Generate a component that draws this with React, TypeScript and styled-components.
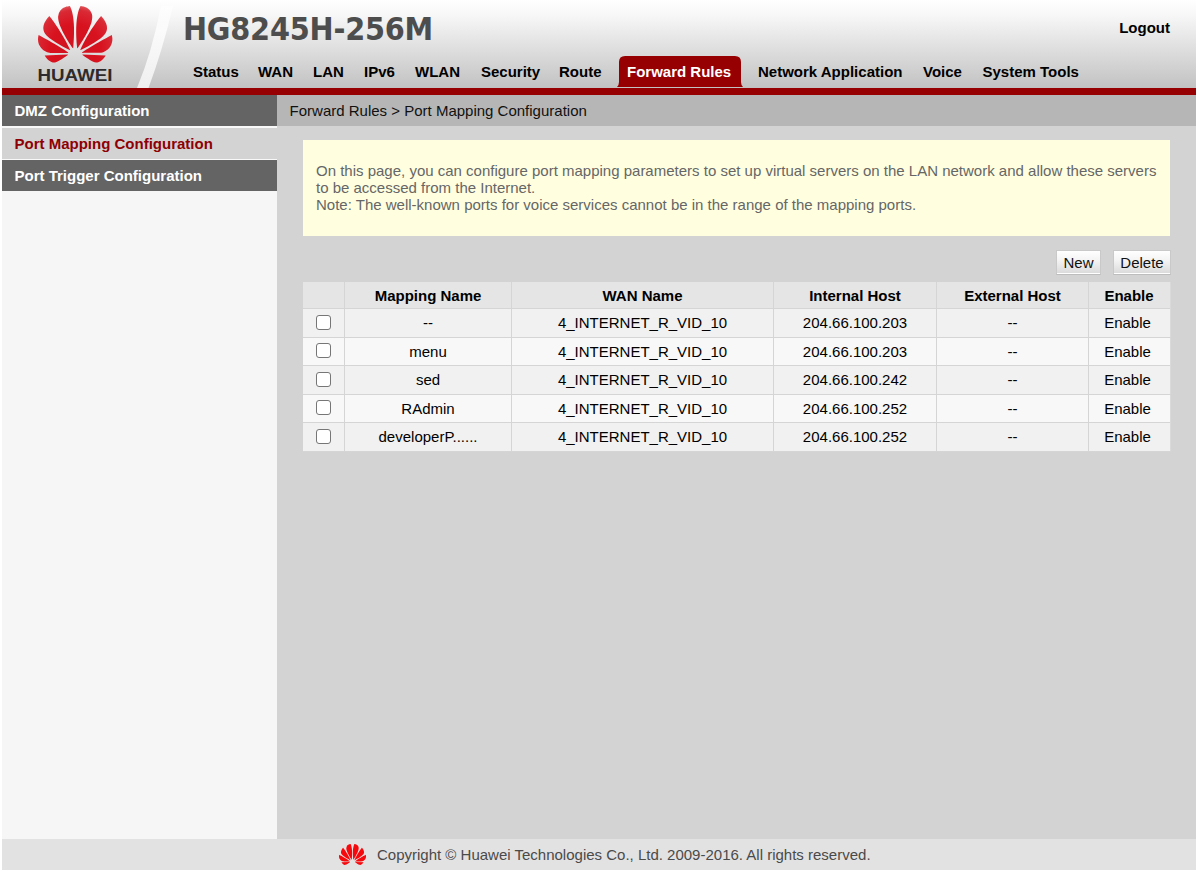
import React from "react";
import styled, { createGlobalStyle } from "styled-components";

const GlobalStyle = createGlobalStyle`
  * { box-sizing: border-box; }
  body {
    margin: 0;
    background: #fff;
    font-family: "Liberation Sans", Arial, sans-serif;
    font-size: 15px;
    color: #000;
  }
`;

const Page = styled.div`
  width: 1194px;
  height: 870px;
  margin-left: 2px;
  display: flex;
  flex-direction: column;
`;

const Header = styled.header`
  height: 95px;
  flex: none;
  display: flex;
  border-bottom: 7px solid #970002;
  background: linear-gradient(#ffffff 0, #f8f8f8 14px, #c2c2c2 88px);
`;

const Brand = styled.svg`
  display: block;
  width: 180px;
  height: 88px;
  flex: none;
`;

const HeaderMain = styled.div`
  flex: 1;
  display: flex;
  flex-direction: column;
`;

const TitleRow = styled.div`
  height: 56px;
  display: flex;
  justify-content: space-between;
  align-items: flex-start;
  padding-right: 26px;
`;

const Title = styled.h1`
  margin: 0;
  padding-left: 1px;
  font: bold 32px/58px "DejaVu Sans Condensed", "DejaVu Sans", sans-serif;
  font-stretch: condensed;
  letter-spacing: -0.22px;
  color: #4d4d4d;
`;

const Logout = styled.a`
  font-weight: bold;
  line-height: 56px;
`;

const Nav = styled.nav`
  display: flex;
  height: 32px;
  padding-left: 11px;
`;

const NavItem = styled.a<{ $w: number }>`
  width: ${(p) => p.$w}px;
  flex: none;
  font-weight: bold;
  line-height: 32px;
  white-space: nowrap;
`;

const ActiveTab = styled.a`
  width: 126px;
  flex: none;
  height: 31px;
  margin: 0 15px 0 -2px;
  padding-left: 10px;
  font-weight: bold;
  line-height: 32px;
  white-space: nowrap;
  color: #fff;
  background: #970002;
  clip-path: path("M0 31 Q2 29 2 26 V6 Q2 0 8 0 H118 Q124 0 124 6 V26 Q124 29 126 31 Z");
`;

const Body = styled.div`
  flex: 1;
  display: flex;
`;

const Sidebar = styled.aside`
  width: 275px;
  flex: none;
  background: #f6f6f6;
`;

const MenuItem = styled.a<{ $active?: boolean; $h: number }>`
  display: block;
  height: ${(p) => p.$h}px;
  padding-left: 12.5px;
  font-weight: bold;
  line-height: 32px;
  color: ${(p) => (p.$active ? "#8e0003" : "#fff")};
  background: ${(p) => (p.$active ? "#d3d3d3" : "#646464")};
  border-bottom: ${(p) => p.$h - 31}px solid #f8f8f8;
`;

const Content = styled.main`
  flex: 1;
  background: #d3d3d3;
`;

const Breadcrumb = styled.div`
  height: 31px;
  padding-left: 12.6px;
  line-height: 32px;
  color: #111;
  background: #b6b6b6;
`;

const Panel = styled.div`
  width: 867px;
  margin: 14px 0 0 26px;
`;

const Notice = styled.div`
  height: 96px;
  padding: 22px 0 0 13px;
  line-height: 17px;
  white-space: nowrap;
  color: #666;
  background: #ffffe0;
`;

const Toolbar = styled.div`
  height: 46px;
  display: flex;
  justify-content: flex-end;
  gap: 12px;
  padding-top: 14px;
  margin-right: -1px;
`;

const Button = styled.button<{ $w: number }>`
  width: ${(p) => p.$w}px;
  height: 25px;
  padding: 1px 0 0;
  border: 1px solid #c9c9c9;
  border-bottom-color: #bdbdbd;
  box-shadow: inset 0 -1px #fff;
  background: linear-gradient(#fff, #f4f4f4 40%, #d9d9d9);
  font: inherit;
  line-height: 22px;
  color: #111;
`;

const Table = styled.div`
  display: flex;
  flex-direction: column;
  margin-right: -1px;
`;

const Row = styled.div<{ $h: number; $bg: string; $head?: boolean }>`
  display: grid;
  grid-template-columns: 42px 167px 262px 163px 152px 82px;
  height: ${(p) => p.$h}px;
  line-height: ${(p) => (p.$head ? 27 : 28)}px;
  background: ${(p) => p.$bg};
  font-weight: ${(p) => (p.$head ? "bold" : "normal")};
  border-bottom: 1px solid #d5d5d5;
`;

const Cell = styled.div`
  text-align: center;
  border-right: 1px solid #d5d5d5;
  &:last-child { border-right-color: #dadada; padding-right: 4px; }
`;

const HeadCell = styled(Cell)`
  &:last-child { padding-right: 1px; }
`;

const CheckCell = styled(Cell)<{ $top: number }>`
  display: flex;
  justify-content: center;
  align-items: flex-start;
  padding-top: ${(p) => p.$top}px;
`;

const Checkbox = styled.input.attrs({ type: "checkbox" })`
  appearance: none;
  width: 15px;
  height: 15px;
  margin: 0;
  border: 1px solid #767676;
  border-radius: 3px;
  background: #fff;
`;

const Footer = styled.footer`
  height: 31px;
  flex: none;
  display: flex;
  align-items: center;
  padding-left: 336.5px;
  gap: 11.5px;
  color: #4a4a4a;
  background: #e2e2e2;
`;

const FooterMark = styled.svg`
  display: block;
  width: 27px;
  height: 21px;
`;

const PETALS =
  "M3.67 6.14S1.82 7.91 1.72 9.78v.35c.08 1.51 1.22 2.4 1.22 2.4 1.83 1.79 6.26 4.04 7.3 4.55 0 0 .06.03.1-.01l.02-.04v-.04C7.52 10.8 3.67 6.14 3.67 6.14zM9.65 18.6c-.02-.08-.1-.08-.1-.08l-7.38.26c.8 1.43 2.15 2.53 3.56 2.2.96-.25 3.16-1.78 3.88-2.3.06-.05.04-.09.04-.09zm.08-.78C6.49 15.63.21 12.28.21 12.28c-.15.46-.2.9-.21 1.3v.07c0 1.07.4 1.82.4 1.82.8 1.69 2.34 2.2 2.34 2.2.7.3 1.4.31 1.4.31.12.02 4.4 0 5.54 0 .05 0 .08-.05.08-.05v-.06c0-.03-.03-.05-.03-.05zM9.06 3.19a3.42 3.42 0 00-2.57 3.15v.41c.03.6.16 1.05.16 1.05.66 2.9 3.86 7.65 4.55 8.65.05.05.1.03.1.03a.1.1 0 00.06-.1c1.06-10.6-1.11-13.42-1.11-13.42-.32.02-1.19.23-1.19.23zm8.299 2.27s-.49-1.8-2.44-2.28c0 0-.57-.14-1.17-.22 0 0-2.18 2.81-1.12 13.43.01.07.06.08.06.08.07.03.1-.03.1-.03.72-1.03 3.9-5.76 4.55-8.64 0 0 .36-1.4.02-2.34zm-2.92 13.07s-.07 0-.09.05c0 0-.01.07.03.1.7.51 2.85 2 3.88 2.3 0 0 .16.05.43.06h.14c.69-.02 1.9-.37 3-2.26l-7.4-.25zm7.83-8.41c.14-2.06-1.94-3.97-1.94-3.98 0 0-3.85 4.66-6.67 10.8 0 0-.03.08.02.13l.04.01h.06c1.06-.53 5.46-2.77 7.28-4.54 0 0 1.15-.93 1.21-2.42zm1.52 2.14s-6.28 3.37-9.52 5.55c0 0-.05.04-.03.11 0 0 .03.06.07.06 1.16 0 5.56 0 5.67-.02 0 0 .57-.02 1.27-.29 0 0 1.56-.5 2.37-2.27 0 0 .73-1.45.17-3.14z";

const NAV: [string, number][] = [
  ["Status", 65], ["WAN", 55], ["LAN", 51], ["IPv6", 51], ["WLAN", 66],
  ["Security", 78], ["Route", 60], ["Forward Rules", 0],
  ["Network Application", 165], ["Voice", 59.5], ["System Tools", 100],
];

const COLUMNS = ["Mapping Name", "WAN Name", "Internal Host", "External Host", "Enable"];
const ROWS = [
  { name: "--", host: "204.66.100.203", h: 29 },
  { name: "menu", host: "204.66.100.203", h: 28 },
  { name: "sed", host: "204.66.100.242", h: 29 },
  { name: "RAdmin", host: "204.66.100.252", h: 28 },
  { name: "developerP......", host: "204.66.100.252", h: 29 },
];

export default function App() {
  return (
    <>
      <GlobalStyle />
      <Page>
        <Header>
          <Brand viewBox="2 0 180 88">
            <defs>
              <radialGradient id="petal" gradientUnits="userSpaceOnUse" cx="12" cy="17" r="15">
                <stop offset="0" stopColor="#d0121f" />
                <stop offset="0.55" stopColor="#d8121f" />
                <stop offset="0.85" stopColor="#d92a35" />
                <stop offset="1" stopColor="#e46a6c" />
              </radialGradient>
              <linearGradient id="slash" x1="0" y1="0" x2="0" y2="1">
                <stop offset="0" stopColor="#fff" stopOpacity="0.6" />
                <stop offset="0.3" stopColor="#fbfbfb" />
                <stop offset="1" stopColor="#efefef" />
              </linearGradient>
            </defs>
            <path d="M137 88 Q152 52 161 6 H173 Q162 52 148.5 88 Z" fill="url(#slash)" />
            <path d={PETALS} fill="url(#petal)" transform="translate(38 -3.2) scale(3.1 3.12)" />
            <text x="37.5" y="80.5" fontSize="16" fontWeight="bold" fill="#2e2a2b" textLength="75" lengthAdjust="spacingAndGlyphs">
              HUAWEI
            </text>
          </Brand>
          <HeaderMain>
            <TitleRow>
              <Title>HG8245H-256M</Title>
              <Logout>Logout</Logout>
            </TitleRow>
            <Nav>
              {NAV.map(([label, w]) =>
                w ? (
                  <NavItem key={label} $w={w}>{label}</NavItem>
                ) : (
                  <ActiveTab key={label}>{label}</ActiveTab>
                )
              )}
            </Nav>
          </HeaderMain>
        </Header>
        <Body>
          <Sidebar>
            <MenuItem $h={33}>DMZ Configuration</MenuItem>
            <MenuItem $h={32} $active>Port Mapping Configuration</MenuItem>
            <MenuItem $h={31}>Port Trigger Configuration</MenuItem>
          </Sidebar>
          <Content>
            <Breadcrumb>Forward Rules &gt; Port Mapping Configuration</Breadcrumb>
            <Panel>
              <Notice>
                On this page, you can configure port mapping parameters to set up virtual servers on the LAN network and allow these servers
                <br />
                to be accessed from the Internet.
                <br />
                Note: The well-known ports for voice services cannot be in the range of the mapping ports.
              </Notice>
              <Toolbar>
                <Button $w={45}>New</Button>
                <Button $w={58}>Delete</Button>
              </Toolbar>
              <Table>
                <Row $h={27} $bg="#e5e5e5" $head>
                  <HeadCell />
                  {COLUMNS.map((c) => <HeadCell key={c}>{c}</HeadCell>)}
                </Row>
                {ROWS.map((r, i) => (
                  <Row key={i} $h={r.h} $bg={i % 2 ? "#f8f8f8" : "#f1f1f1"}>
                    <CheckCell $top={i % 2 ? 5 : 6}><Checkbox /></CheckCell>
                    <Cell>{r.name}</Cell>
                    <Cell>4_INTERNET_R_VID_10</Cell>
                    <Cell>{r.host}</Cell>
                    <Cell>--</Cell>
                    <Cell>Enable</Cell>
                  </Row>
                ))}
              </Table>
            </Panel>
          </Content>
        </Body>
        <Footer>
          <FooterMark viewBox="0 2.9 24 18.2" preserveAspectRatio="none">
            <path d={PETALS} fill="#f5090d" />
          </FooterMark>
          <span>Copyright © Huawei Technologies Co., Ltd. 2009-2016. All rights reserved.</span>
        </Footer>
      </Page>
    </>
  );
}
